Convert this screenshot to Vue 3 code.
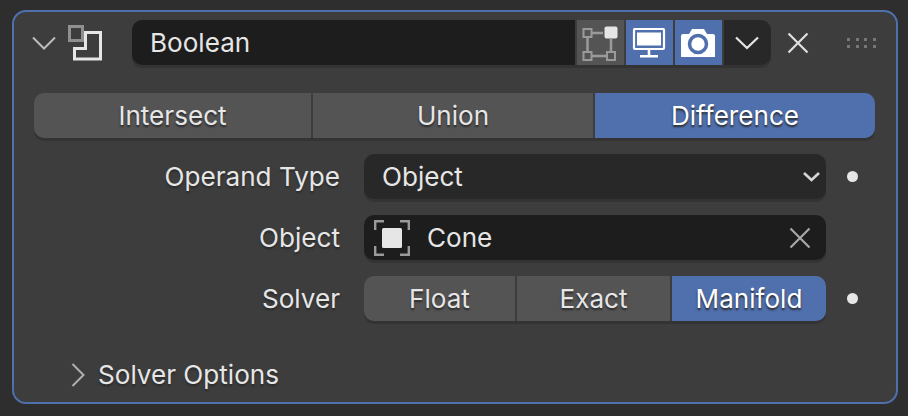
<template>
  <div class="page">
    <div class="panel">
      <div class="header">
        <svg class="fold" width="26" height="16" viewBox="0 0 26 16"><path d="M1 2.5 L12 13.5 L23 2.5" fill="none" stroke="#bdbdbd" stroke-width="2" /></svg>
        <svg class="mod-icon" width="38" height="38" viewBox="0 0 38 38">
          <rect x="3.5" y="2.5" width="13" height="14" fill="none" stroke="#8f8f8f" stroke-width="3" />
          <path d="M19.5 8.5 H34.5 V35 H8.5 V24.5 H19.5 Z" fill="none" stroke="#e6e6e6" stroke-width="3" />
        </svg>
        <div class="name-group">
          <div class="name-field">Boolean</div>
          <button class="hbtn grey">
            <svg width="38" height="36" viewBox="0 0 38 36">
              <path d="M11 8 H22 M6.5 12 V27 M30 14 V27 M11 31 H26" stroke="#9a9a9a" stroke-width="2.5" fill="none" />
              <rect x="2.5" y="4" width="8" height="8" fill="none" stroke="#9a9a9a" stroke-width="2" />
              <rect x="2.5" y="27" width="8" height="8" fill="none" stroke="#9a9a9a" stroke-width="2" />
              <rect x="26" y="27" width="8" height="8" fill="none" stroke="#9a9a9a" stroke-width="2" />
              <rect x="23.5" y="1.5" width="13" height="12" rx="2" fill="#e6e6e6" />
            </svg>
          </button>
          <button class="hbtn blue">
            <svg width="34" height="30" viewBox="0 0 34 30">
              <rect x="2" y="1" width="30" height="20" rx="1" fill="none" stroke="#fff" stroke-width="2.2" />
              <rect x="5" y="4.5" width="24" height="13" fill="#fff" />
              <path d="M17 22 V27 M8 28.2 H26" stroke="#fff" stroke-width="2.6" fill="none" />
            </svg>
          </button>
          <button class="hbtn blue">
            <svg width="34" height="28" viewBox="0 0 34 28">
              <path d="M0 7 Q0 5 2 5 H8 L11 0 H23 L26 5 H32 Q34 5 34 7 V28 H0 Z" fill="#fff" />
              <circle cx="17" cy="15" r="8.5" fill="none" stroke="#4f6fad" stroke-width="3.5" />
            </svg>
          </button>
          <button class="hbtn dark">
            <svg width="24" height="14" viewBox="0 0 24 14"><path d="M1 1.5 L12 12 L23 1.5" fill="none" stroke="#e6e6e6" stroke-width="2.2" /></svg>
          </button>
        </div>
        <svg class="close" width="22" height="22" viewBox="0 0 22 22"><path d="M1.5 1.5 L20.5 20.5 M20.5 1.5 L1.5 20.5" stroke="#e0e0e0" stroke-width="2.2" /></svg>
        <div class="grip"><i v-for="n in 8" :key="n"></i></div>
      </div>

      <div class="segments top">
        <div v-for="s in operations" :key="s" class="seg" :class="{ on: s === 'Difference' }">{{ s }}</div>
      </div>

      <div class="row">
        <label>Operand Type</label>
        <div class="field select">
          <span>Object</span>
          <svg width="17" height="11" viewBox="0 0 17 11"><path d="M1 2 L8.5 9 L16 2" fill="none" stroke="#d6d6d6" stroke-width="2.6" /></svg>
        </div>
        <span class="dot"></span>
      </div>

      <div class="row">
        <label>Object</label>
        <div class="field picker">
          <svg width="36" height="36" viewBox="0 0 36 36">
            <path d="M1.2 10 V1.2 H10 M26 1.2 H34.8 V10 M34.8 26 V34.8 H26 M10 34.8 H1.2 V26" fill="none" stroke="#9a9a9a" stroke-width="2.4" />
            <rect x="8" y="8" width="20" height="20" rx="1.5" fill="#e6e6e6" />
          </svg>
          <span class="obj">Cone</span>
          <svg class="clear" width="22" height="22" viewBox="0 0 22 22"><path d="M1.5 1.5 L20.5 20.5 M20.5 1.5 L1.5 20.5" stroke="#a8a8a8" stroke-width="2.2" /></svg>
        </div>
        <span class="blank"></span>
      </div>

      <div class="row">
        <label>Solver</label>
        <div class="segments solver">
          <div v-for="s in solvers" :key="s" class="seg" :class="{ on: s === 'Manifold' }">{{ s }}</div>
        </div>
        <span class="dot"></span>
      </div>

      <div class="sub">
        <svg width="14" height="24" viewBox="0 0 14 24"><path d="M1.5 1 L12.5 12 L1.5 23" fill="none" stroke="#b0b0b0" stroke-width="2" /></svg>
        <span>Solver Options</span>
      </div>
    </div>
  </div>
</template>

<script setup>
const operations = ['Intersect', 'Union', 'Difference']
const solvers = ['Float', 'Exact', 'Manifold']
</script>

<style>
html, body { margin: 0; background: #2e2e2e; }
</style>

<style scoped>
.page { width: 908px; height: 416px; box-sizing: border-box; padding: 10px 10px 12px 12px; background: #2e2e2e; font-family: Inter, "Noto Sans", sans-serif; font-size: 26.1px; color: #e6e6e6; }
.panel { width: 886px; height: 394px; box-sizing: border-box; border: 2px solid #4f6fad; border-radius: 14px; background: #3d3d3d; padding: 8px 20px 0 20px; }
.header { display: flex; align-items: center; height: 45px; margin-bottom: 28px; }
.fold { margin-left: -2px; margin-right: 8px; }
.mod-icon { margin-right: 28px; }
.name-group { display: flex; width: 639px; height: 45px; gap: 2px; box-shadow: 0 3px 0 #333; border-radius: 10px; }
.name-field { flex: 1; background: #1d1d1d; border-radius: 10px 0 0 10px; padding-left: 18px; line-height: 45px; }
.hbtn { width: 47px; height: 45px; padding: 0; border: 0; display: flex; align-items: center; justify-content: center; }
.hbtn.grey { background: #545454; }
.hbtn.blue { background: #4f6fad; }
.hbtn.dark { background: #282828; border-radius: 0 10px 10px 0; }
.close { margin-left: 16px; }
.grip { display: grid; grid-template-columns: repeat(4, 3px); gap: 4px 5.7px; margin-left: 38px; }
.grip i { width: 3px; height: 3px; background: #777; }
.segments { display: grid; gap: 2px; box-shadow: 0 3px 0 #333; border-radius: 10px; }
.seg { background: #545454; text-align: center; text-shadow: 0 2px 2px #2a2a2a; line-height: 45px; height: 45px; }
.seg.on { background: #4f6fad; color: #fff; }
.seg:first-child { border-radius: 10px 0 0 10px; }
.seg:last-child { border-radius: 0 10px 10px 0; }
.top { width: 841px; grid-template-columns: 277px 280px 280px; margin-bottom: 16px; }
.row { display: flex; align-items: center; height: 45px; margin-bottom: 16px; }
.row label { width: 306px; text-align: right; margin-right: 24px; text-shadow: 0 2px 2px #2a2a2a; }
.field { width: 462px; height: 45px; box-sizing: border-box; border-radius: 10px; display: flex; align-items: center; box-shadow: 0 3px 0 #333; }
.select { background: #282828; padding: 0 6px 0 18px; justify-content: space-between; }
.picker { background: #1d1d1d; padding: 0 15px 0 10px; }
.obj { margin-left: 17px; flex: 1; }
.solver { width: 462px; grid-template-columns: 151px 153px 154px; }
.dot { width: 11px; height: 11px; border-radius: 50%; background: #e6e6e6; margin-left: 21px; }
.blank { width: 11px; margin-left: 21px; }
.sub { display: flex; align-items: center; margin: 38px 0 0 37px; gap: 13px; text-shadow: 0 2px 2px #2a2a2a; }
</style>
